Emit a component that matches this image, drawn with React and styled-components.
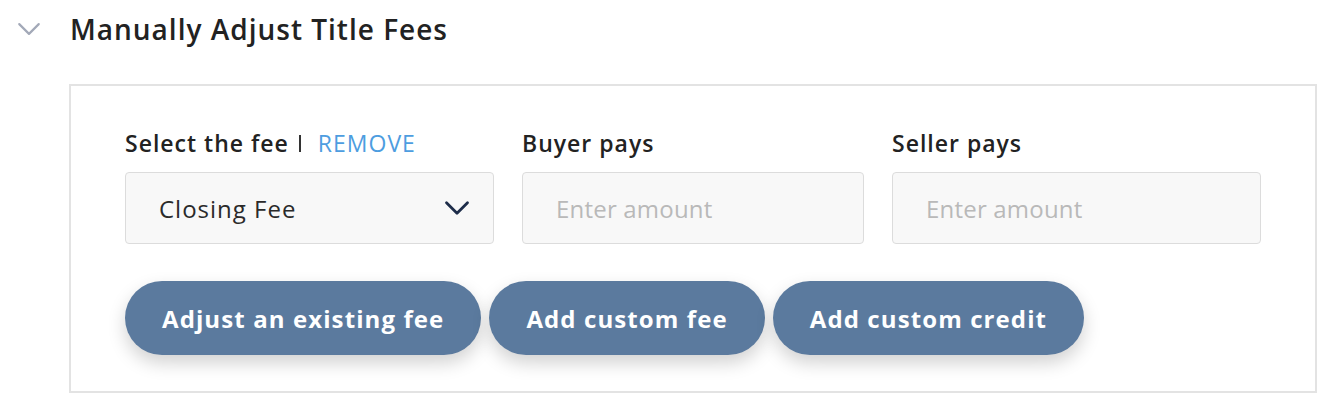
import React from 'react'
import styled, { createGlobalStyle } from 'styled-components'

const GlobalStyle = createGlobalStyle`
  body {
    margin: 0;
    background: #ffffff;
    font-family: "Open Sans", Lato, sans-serif;
  }
`

const ChevronDown = ({ color, size, stroke }) => (
  <svg width={size} height={size} viewBox="0 0 24 24" fill="none">
    <path d="M3 7.5 L12 16.5 L21 7.5" stroke={color} strokeWidth={stroke} strokeLinecap="round" strokeLinejoin="round" />
  </svg>
)

const buttons = ['Adjust an existing fee', 'Add custom fee', 'Add custom credit']

export default function App() {
  return (
    <>
      <GlobalStyle />
      <Page>
        <Header>
          <Toggle>
            <ChevronDown color="#a3a9b8" size={26} stroke={2} />
          </Toggle>
          <Title>Manually Adjust Title Fees</Title>
        </Header>
        <Panel>
          <Fields>
            <Field>
              <Label>
                Select the fee<Divider />
                <Remove>REMOVE</Remove>
              </Label>
              <Select>
                <span>Closing Fee</span>
                <ChevronDown color="#1e2d4a" size={28} stroke={2.4} />
              </Select>
            </Field>
            <Field narrow>
              <Label>Buyer pays</Label>
              <Input placeholder="Enter amount" />
            </Field>
            <Field>
              <Label>Seller pays</Label>
              <Input placeholder="Enter amount" />
            </Field>
          </Fields>
          <Actions>
            {buttons.map((b) => (
              <Button key={b}>{b}</Button>
            ))}
          </Actions>
        </Panel>
      </Page>
    </>
  )
}

const Page = styled.div`
  width: 1338px;
  height: 414px;
  box-sizing: border-box;
  padding: 8px 0 0 0;
`

const Header = styled.div`
  display: flex;
  align-items: center;
  height: 42px;
`

const Toggle = styled.div`
  width: 70px;
  display: flex;
  padding-left: 16px;
  box-sizing: border-box;
  align-items: center;
`

const Title = styled.div`
  font-size: 28px;
  font-weight: 600;
  letter-spacing: 1px;
  color: #222222;
`

const Panel = styled.div`
  margin: 34px 0 0 69px;
  width: 1248px;
  height: 309px;
  box-sizing: border-box;
  border: 2px solid #e3e3e3;
  padding: 39px 0 0 54px;
`

const Fields = styled.div`
  display: flex;
  gap: 28px;
`

const Field = styled.div`
  width: ${(p) => (p.narrow ? '342px' : '369px')};
  display: flex;
  flex-direction: column;
`

const Label = styled.div`
  display: flex;
  align-items: center;
  height: 36px;
  font-size: 23px;
  font-weight: 600;
  letter-spacing: 1px;
  color: #222222;
  margin-bottom: 11px;
`

const Divider = styled.span`
  display: inline-block;
  width: 2px;
  height: 17px;
  background: #333333;
  margin: 0 17px 0 10px;
`

const Remove = styled.span`
  color: #4d9de0;
  font-weight: 400;
  letter-spacing: 1px;
`

const Select = styled.div`
  height: 72px;
  box-sizing: border-box;
  border: 1px solid #dcdcdc;
  border-radius: 4px;
  background: #f8f8f8;
  display: flex;
  align-items: center;
  justify-content: space-between;
  padding: 0 22px 0 33px;
  font-size: 24px;
  letter-spacing: 1px;
  color: #2a2a2a;
`

const Input = styled.input`
  height: 72px;
  box-sizing: border-box;
  border: 1px solid #dcdcdc;
  border-radius: 4px;
  background: #f8f8f8;
  padding: 0 33px;
  font-family: "Open Sans", Lato, sans-serif;
  font-size: 24px;
  letter-spacing: 0.2px;
  color: #2a2a2a;
  outline: none;
  &::placeholder {
    color: #b9b9b9;
  }
`

const Actions = styled.div`
  display: flex;
  gap: 8px;
  margin-top: 37px;
`

const Button = styled.button`
  height: 74px;
  padding: 0 37px;
  border: none;
  border-radius: 37px;
  background: #5b7a9e;
  color: #ffffff;
  font-family: "Open Sans", Lato, sans-serif;
  font-size: 24px;
  font-weight: 700;
  letter-spacing: 1.1px;
  box-shadow: 0 8px 18px rgba(0, 0, 0, 0.18);
  cursor: pointer;
`
